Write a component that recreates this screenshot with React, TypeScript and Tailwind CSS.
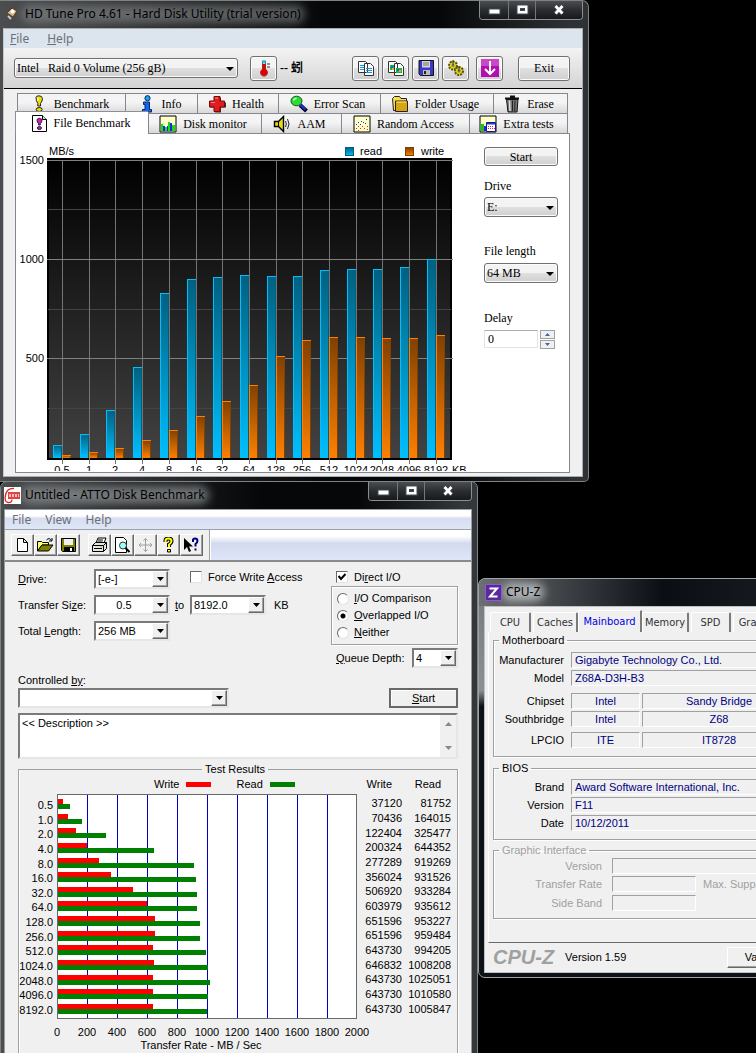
import type { ReactNode } from "react";

const sizes = ["0.5", "1", "2", "4", "8", "16", "32", "64", "128", "256", "512", "1024", "2048", "4096", "8192"];
const hdRead = [63, 123, 240, 457, 830, 900, 910, 920, 915, 915, 945, 950, 950, 960, 1005];
const hdWrite = [13, 28, 50, 90, 140, 210, 285, 370, 512, 592, 612, 612, 607, 607, 618];

const attoRows: Array<[string, number, number]> = [
  ["0.5", 37120, 81752],
  ["1.0", 70436, 164015],
  ["2.0", 122404, 325477],
  ["4.0", 200324, 644352],
  ["8.0", 277289, 919269],
  ["16.0", 356024, 931526],
  ["32.0", 506920, 933284],
  ["64.0", 603979, 935612],
  ["128.0", 651596, 953227],
  ["256.0", 651596, 959484],
  ["512.0", 643730, 994205],
  ["1024.0", 646832, 1008208],
  ["2048.0", 643730, 1025051],
  ["4096.0", 643730, 1010580],
  ["8192.0", 643730, 1005847],
];

/* ---------- window chrome ---------- */

function WindowButtons() {
  const cell = "flex h-[18px] items-center justify-center border-r border-[#74787b] bg-linear-to-b from-[#4b4e51] via-[#2b2d30] to-[#17191b]";
  return (
    <div className="flex overflow-hidden rounded-b-[4px] border border-t-0 border-[#8b8f92]">
      <button type="button" aria-label="Minimize" className={`${cell} w-[29px]`}>
        <svg width="13" height="12"><rect x="1" y="5" width="11" height="5" fill="#fff" stroke="#444a58" /></svg>
      </button>
      <button type="button" aria-label="Maximize" className={`${cell} w-[27px]`}>
        <svg width="13" height="12">
          <rect x="1" y="1" width="11" height="9" fill="#fff" stroke="#444a58" />
          <rect x="4.5" y="4.5" width="4" height="2" fill="#333" stroke="#444a58" />
        </svg>
      </button>
      <button type="button" aria-label="Close" className={`${cell} w-[46px] border-r-0`}>
        <svg width="13" height="12" fill="none">
          <path d="M2.5 2l7 7.5M9.5 2l-7 7.5" stroke="#444a58" strokeWidth="4.5" />
          <path d="M2.5 2l7 7.5M9.5 2l-7 7.5" stroke="#fff" strokeWidth="2.6" />
        </svg>
      </button>
    </div>
  );
}

function TitleBar({ icon, title, glow, controls = true }: { icon: ReactNode; title: string; glow: string; controls?: boolean }) {
  return (
    <div className="flex h-[27px] items-start justify-between overflow-hidden">
      <div className="flex h-[26px] items-center gap-1">
        <span className="relative z-10">{icon}</span>
        <h1 className="relative font-['Noto_Sans'] text-[12px] leading-[18px] whitespace-nowrap text-black">
          <span className={`absolute -inset-x-1 inset-y-0 rounded-full blur-[5px] ${glow}`} />
          <span className="relative">{title}</span>
        </h1>
      </div>
      {controls && <WindowButtons />}
    </div>
  );
}

/* ---------- HD Tune ---------- */

function Bang({ fill }: { fill: string }) {
  return (
    <>
      <path d="M6 2.5Q6 .8 9 .8T12.500 3.500Q12.500 6 10.500 8.500V11H7.800V8.500Q6 6 6 2.500Z" fill={fill} stroke="#222" />
      <ellipse cx="9.2" cy="14.5" rx="3" ry="2" fill={fill} stroke="#222" />
      <path d="M7.8 2.5v3" stroke="#fff" />
    </>
  );
}

const tabIcons: Record<string, ReactNode> = {
  Benchmark: <Bang fill="#e8de10" />,
  Info: (
    <>
      <circle cx="9.5" cy="3.2" r="2.6" fill="#19a4ef" stroke="#042a66" />
      <path d="M5.5 7h6v7.5h2V17h-9v-2.5h2.5v-5h-1.500z" fill="#1464f0" stroke="#042a66" />
    </>
  ),
  Health: (
    <>
      <path d="M7 2.5h6v5h5v5h-5v5H7v-5H2v-5h5z" fill="#333" />
      <path d="M6 1.5h6v4.500h4.500v6H12v4.500H6V12H1.500V6H6z" fill="#e01c1c" stroke="#7a0606" />
      <path d="M7 3h3M3 7.5h4" stroke="#ff8c8c" />
    </>
  ),
  "Error Scan": (
    <>
      <path d="M10 10l6.5 6" stroke="#000" strokeWidth="4" />
      <path d="M10.5 10l5 4.5" stroke="#1e2ae0" strokeWidth="2.5" />
      <ellipse cx="6.5" cy="6" rx="5.5" ry="4.8" fill="#2fd83a" stroke="#0b5d10" />
      <path d="M3.5 5.5Q4 3.5 6.5 3.3" stroke="#c9ffc9" fill="none" strokeWidth="1.5" />
    </>
  ),
  "Folder Usage": (
    <>
      <path d="M1.5 3.5l2-2h5l1.5 2h5.500v12h-13z" fill="#f5e04b" stroke="#222" />
      <path d="M4.5 6h12v10.5h-12z" fill="#d9a413" stroke="#222" />
      <path d="M5.5 7h10" stroke="#ffe88b" />
    </>
  ),
  Erase: (
    <>
      <path d="M3.5 4.5h11.5l-1 12.5H5z" fill="#777" stroke="#111" />
      <path d="M2 3.5h14M7 1.5h5" stroke="#111" strokeWidth="2" />
      <path d="M6.5 5.5l.5 10.5" stroke="#ddd" strokeWidth="1.5" />
      <path d="M9.5 5.5v10.5M12 5.5l-.3 10.5" stroke="#222" />
    </>
  ),
  "File Benchmark": (
    <>
      <path d="M2.5 1.5h10l4 4v12h-14z" fill="#fff" stroke="#000" />
      <path d="M12.5 1.5v4h4" fill="#ddd" stroke="#000" />
      <path d="M7 5.5q2-2.5 5 0 0 3-1.700 4V11H8.500V9.500Q7 8.500 7 5.500z" fill="#e012dc" stroke="#222" />
      <ellipse cx="9.4" cy="14" rx="2" ry="1.5" fill="#e012dc" stroke="#222" />
    </>
  ),
  "Disk monitor": (
    <>
      <path d="M1 1h16v16H1z" fill="#ffffc8" stroke="#000" />
      <path d="M2 9h2v7H2zM6 12h2v4H6zM9 7h2v9H9zM13 10h3v6h-3z" fill="#12e012" />
      <path d="M4 11h2v5H4zM8 11h1v5H8zM11 8h2v8h-2z" fill="#2222e8" />
    </>
  ),
  AAM: (
    <>
      <path d="M1.5 6.5h4l5-5v15l-5-5h-4z" fill="#e6dc14" stroke="#000" strokeWidth="1.4" />
      <path d="M5.5 6.5v5" stroke="#000" />
      <path d="M12.5 6q1.8 3 0 6M14.5 4q3 5 0 10" fill="none" stroke="#222" />
    </>
  ),
  "Random Access": (
    <>
      <path d="M1 1h16v16H1z" fill="#ffffc8" stroke="#000" />
      <path d="M3 9h1v1H3zM5 7h1v1H5zM7 9h1v1H7zM8 6h1v1H8zM10 7h1v1h-1zM13 4h1v1h-1zM12 8h1v1h-1z" fill="#22e" />
      <path d="M3 13h1v1H3zM5 11h1v1H5zM7 13h1v1H7zM9 11h1v1H9zM11 13h1v1h-1zM14 11h1v1h-1zM14 14h1v1h-1zM5 15h1v1H5z" fill="#e22" />
    </>
  ),
  "Extra tests": (
    <>
      <path d="M1 1h16v16H1z" fill="#ffffc8" stroke="#000" />
      <path d="M2 9h3v7H2z" fill="#12c812" />
      <path d="M5 11h2v5H5z" fill="#22e" />
      <path d="M7.5 7.5h9v9h-9z" fill="#fff" stroke="#111a88" />
      <path d="M8 8h8v1.5H8z" fill="#2233e0" />
      <path d="M9 11h1v1H9zM11 11h1v1h-1zM13 11h1v1h-1zM9 13h1v1H9zM11 13h1v1h-1zM13 13h1v1h-1zM15 13h1v1h-1z" fill="#e22" />
    </>
  ),
};

function Tab({ label, width }: { label: string; width: string }) {
  const selected = label === "File Benchmark";
  return (
    <button
      type="button"
      role="tab"
      aria-selected={selected}
      className={`flex items-center justify-center gap-[6px] pr-[4px] whitespace-nowrap ${width} ${
        selected
          ? "relative -mt-[2px] h-[23px] border-t border-l border-[#8e8f98] bg-white"
          : "h-[20px] border-t border-l border-[#85868f] bg-linear-to-b from-[#f4f4f4] from-45% to-[#d8d8d8] last:border-r"
      }`}
    >
      <svg width="18" height="18" className="shrink-0">{tabIcons[label]}</svg>
      {label}
    </button>
  );
}

const glossy = "rounded-[3px] border border-[#707070] bg-linear-to-b from-[#f3f3f3] from-48% via-[#e0e0e0] via-50% to-[#cfcfcf] text-black shadow-[inset_0_0_0_1px_#fbfbfb]";

function ToolButton({ label, children }: { label: string; children: ReactNode }) {
  return (
    <button type="button" aria-label={label} className={`flex h-[25px] w-[27px] items-center justify-center ${glossy}`}>
      <svg width="18" height="18">{children}</svg>
    </button>
  );
}

function GlossySelect({ id, value, width }: { id: string; value: string; width: string }) {
  return (
    <div className={`relative ${width}`}>
      <select id={id} aria-label={id} className={`h-[20px] w-full appearance-none pl-[2px] leading-[16px] ${glossy}`}>
        <option>{value}</option>
      </select>
      <svg width="8" height="4" className="pointer-events-none absolute top-[9px] right-[4px]"><path d="M0 0h8L4 4z" /></svg>
    </div>
  );
}

function FileBenchmarkChart() {
  const base = 324;
  const scale = 0.1985;
  const tick = (i: number) => Math.round(46 + i * 26.7);
  const lineY = (v: number) => Math.floor(base - v * scale);
  return (
    <svg width="450" height="337" className="font-['Liberation_Sans'] text-[11px]" shapeRendering="crispEdges">
      <defs>
        <linearGradient id="plot" x1="0" y1="0" x2="0" y2="1"><stop stopColor="#000" /><stop offset="1" stopColor="#424242" /></linearGradient>
        <linearGradient id="read" x1="0" y1="0" x2="0" y2="1"><stop stopColor="#006080" /><stop offset="1" stopColor="#00bfff" /></linearGradient>
        <linearGradient id="write" x1="0" y1="0" x2="0" y2="1"><stop stopColor="#804000" /><stop offset="1" stopColor="#ff8000" /></linearGradient>
      </defs>
      <rect x="31" y="24" width="405" height="302" fill="#000" />
      <rect x="33" y="26" width="401" height="298" fill="url(#plot)" />
      {[250, 750, 1250].map((v) => (
        <rect key={v} x="32" y={lineY(v)} width="403" height="1" fill="#444" />
      ))}
      {sizes.map((s, i) => (
        <rect key={s} x={tick(i)} y="26" width="1" height="304" fill="#747474" />
      ))}
      {[500, 1000, 1500].map((v) => (
        <g key={v}>
          <rect x="31" y={lineY(v)} width="406" height="1" fill="#808080" />
          <text x="28" y={lineY(v) + 4} textAnchor="end">{v}</text>
        </g>
      ))}
      {sizes.map((s, i) => {
        const x = tick(i);
        const r = Math.round(hdRead[i] * scale);
        const w = Math.round(hdWrite[i] * scale);
        return (
          <g key={s}>
            <rect x={x - 9} y={base - r} width="9" height={r} fill="url(#read)" />
            <path d={`M${x - 8.5} ${base}v${-r + 0.5}h8`} stroke="#00bfff" fill="none" />
            <path d={`M${x - 0.5} ${base - r + 1}v${r - 1}`} stroke="#00607f" />
            <rect x={x} y={base - w} width="9" height={w} fill="url(#write)" />
            <path d={`M${x + 0.5} ${base}v${-w + 0.5}h8`} stroke="#ff8000" fill="none" />
            <path d={`M${x + 8.5} ${base - w + 1}v${w - 1}`} stroke="#804000" />
            <text x={x} y="340" textAnchor="middle">{s}</text>
          </g>
        );
      })}
      <text x="436" y="340">KB</text>
      <text x="33" y="21">MB/s</text>
      <rect x="329.5" y="13.5" width="8" height="8" fill="url(#read)" stroke="#00607f" />
      <text x="344" y="21">read</text>
      <rect x="389.5" y="13.5" width="8" height="8" fill="url(#write)" stroke="#804000" />
      <text x="405" y="21">write</text>
    </svg>
  );
}

function HdTune() {
  return (
    <section className="absolute top-0 left-0 w-[589px] rounded-tr-[7px] rounded-br-[5px] border-t border-r border-b border-[#7d8384] bg-[linear-gradient(90deg,#4b4d4f_0,#2c2e30_25%,#050708_55%,#050708_75%,#2e3234_97%)] pr-[5px] pb-[4px] pl-[3px]">
      <TitleBar
        title="HD Tune Pro 4.61 - Hard Disk Utility (trial version)"
        glow="bg-[#8a8d90]/60"
        icon={
          <svg width="18" height="18">
            <path d="M4 8l5-5 5 3-4 6z" fill="#d9b48a" stroke="#5a3d24" />
            <circle cx="9.5" cy="6.5" r="2" fill="#fff" />
            <path d="M5 11l3 3" stroke="#c9c9c9" strokeWidth="2" />
          </svg>
        }
      />
      <div className="border border-t-[#a9adb0] border-r-[#a9adb0] border-b-[#a9adb0] border-l-[#c9c9c9] bg-[#f0f0f0] font-['Liberation_Serif'] text-[12px] text-black">
        <nav className="flex h-[19px] gap-[18px] bg-[#dce4ee] px-[6px] font-['Noto_Sans'] leading-[18px] text-[#6d7177]">
          <button type="button"><u>F</u>ile</button>
          <button type="button"><u>H</u>elp</button>
        </nav>
        <div className="flex h-[41px] items-center border-b border-black bg-linear-to-b from-[#f3f3f3] to-[#d4d4d4] pl-[10px]">
          <GlossySelect id="volume" value={"Intel\u00a0\u00a0 Raid 0 Volume (256 gB)"} width="w-[224px]" />
          <div className="ml-[12px] flex items-center gap-[3px]">
            <ToolButton label="Temperature">
              <path d="M7.5 2h3v8.5a3.5 3.5 0 1 1-3 0z" fill="#fff" stroke="#555" />
              <circle cx="9" cy="13.5" r="3.4" fill="#e00000" />
              <path d="M9 5v8" stroke="#e00000" strokeWidth="3" />
              <path d="M7.500 3h3" stroke="#20c8e0" strokeWidth="3" />
              <path d="M12 5h3M12 8h3" stroke="#333" />
            </ToolButton>
            <span className="font-['Liberation_Serif','Noto_Sans_CJK_TC',serif] font-bold">-- 蚓</span>
          </div>
          <div className="ml-auto flex gap-[3px]">
            <ToolButton label="Copy text">
              <path d="M1.5 2.5h7l2 2v9h-9zM7.5 4.5h6l3 3v9h-9z" fill="#fff" stroke="#333" />
              <path d="M3 6.500h4M3 8.500h4M3 10.500h4M9 9.500h6M9 11.500h6M9 13.500h6" stroke="#1a90d8" />
            </ToolButton>
            <ToolButton label="Copy image">
              <path d="M1.5 2.5h7l2 2v9h-9zM7.5 4.5h6l3 3v9h-9z" fill="#fff" stroke="#333" />
              <path d="M3 6h4v5H3zM9 9h6v5H9z" fill="#18b840" />
              <path d="M4 7h2v2H4zM10 10h2v2h-2z" fill="#1a60e8" />
              <path d="M5 9h2v2H5zM12 11h2v2h-2z" fill="#e8b020" />
            </ToolButton>
            <ToolButton label="Save">
              <path d="M2 1.5h14.5v15h-13L2 15z" fill="#3a3ac8" stroke="#111" />
              <path d="M5 2h8v6.5H5z" fill="#d5d5d5" />
              <path d="M6 4h6M6 6h6" stroke="#777" />
              <path d="M6 11h7v5H6z" fill="#bbb" />
              <path d="M7 12h2v3H7z" fill="#222" />
            </ToolButton>
            <ToolButton label="Options">
              <circle cx="6" cy="6.5" r="4" fill="#e0d820" stroke="#5a5408" strokeWidth="2" strokeDasharray="2 1" />
              <circle cx="12" cy="12" r="4" fill="#e0d018" stroke="#5a5408" strokeWidth="2" strokeDasharray="2 1" />
              <circle cx="6" cy="6.5" r="1.5" fill="#777" />
              <circle cx="12" cy="12" r="1.5" fill="#777" />
              <path d="M6 1v5M12 7v5" stroke="#333" />
            </ToolButton>
            <div className="ml-[4px]">
              <ToolButton label="Download">
                <rect width="18" height="18" fill="#b010b0" />
                <rect width="18" height="7" fill="#c848c8" />
                <path d="M9 2v12M4 10l5 5 5-5" fill="none" stroke="#fff" strokeWidth="2" />
              </ToolButton>
            </div>
          </div>
          <button type="button" className={`mr-[12px] ml-[15px] h-[25px] w-[52px] ${glossy}`}>Exit</button>
        </div>
        <div className="pt-[4px] pr-[12px] pb-[3px] pl-[11px]">
          <div role="tablist">
            <div className="flex pl-[2px]">
              <Tab label="Benchmark" width="w-[108px]" />
              <Tab label="Info" width="w-[72px]" />
              <Tab label="Health" width="w-[81px]" />
              <Tab label="Error Scan" width="w-[102px]" />
              <Tab label="Folder Usage" width="w-[113px]" />
              <Tab label="Erase" width="w-[75px]" />
            </div>
            <div className="flex">
              <Tab label="File Benchmark" width="w-[133px]" />
              <Tab label="Disk monitor" width="w-[113px]" />
              <Tab label="AAM" width="w-[80px]" />
              <Tab label="Random Access" width="w-[128px]" />
              <Tab label="Extra tests" width="w-[99px]" />
            </div>
          </div>
          <div className="-mt-px flex justify-between border border-[#85868f] bg-white pb-px">
            <FileBenchmarkChart />
            <div className="flex w-[85px] flex-col pt-[13px] pr-[11px]">
              <button type="button" className={`h-[19px] w-full leading-[16px] ${glossy}`}>Start</button>
              <label htmlFor="drive" className="mt-[12px] mb-[3px] leading-[16px]">Drive</label>
              <GlossySelect id="drive" value="E:" width="w-full" />
              <label htmlFor="length" className="mt-[26px] mb-[4px] leading-[16px]">File length</label>
              <GlossySelect id="length" value="64 MB" width="w-full" />
              <label htmlFor="delay" className="mt-[27px] mb-[4px] leading-[16px]">Delay</label>
              <div className="flex gap-[2px]">
                <input id="delay" defaultValue="0" className="h-[18px] w-[54px] border border-[#e2e3ea] border-t-[#abadb3] bg-white px-[3px]" />
                <div className="flex flex-col gap-px">
                  <button type="button" aria-label="Increase" className="flex h-[9px] w-[15px] items-center justify-center border border-[#a0a0a0] bg-[#f0f0f0]">
                    <svg width="5" height="3"><path d="M0 3h5L2.5 0z" fill="#4a5fb0" /></svg>
                  </button>
                  <button type="button" aria-label="Decrease" className="flex h-[9px] w-[15px] items-center justify-center border border-[#a0a0a0] bg-[#f0f0f0]">
                    <svg width="5" height="3"><path d="M0 0h5L2.5 3z" fill="#4a5fb0" /></svg>
                  </button>
                </div>
              </div>
            </div>
          </div>
        </div>
      </div>
    </section>
  );
}

/* ---------- ATTO ---------- */

const sunken = "border-2 border-t-[#7a7a7a] border-r-[#e6e6e6] border-b-[#e6e6e6] border-l-[#7a7a7a] bg-white";
const raised = "border border-t-white border-r-[#696969] border-b-[#696969] border-l-white bg-[#f0f0f0] shadow-[inset_-1px_-1px_0_#a0a0a0]";

function ClassicSelect({ id, value, width, center = false }: { id: string; value: string; width: string; center?: boolean }) {
  return (
    <div className={`relative ${width}`}>
      <select id={id} aria-label={id} className={`h-[20px] w-full appearance-none pr-[18px] pl-[2px] text-[11px] leading-[16px] text-black ${sunken} ${center ? "text-center" : ""}`}>
        <option>{value}</option>
      </select>
      <span className={`pointer-events-none absolute top-[2px] right-[2px] flex h-[16px] w-[16px] items-center justify-center ${raised}`}>
        <svg width="7" height="4"><path d="M0 0h7L3.5 4z" /></svg>
      </span>
    </div>
  );
}

function AttoButton({ label, children }: { label: string; children: ReactNode }) {
  return (
    <button type="button" aria-label={label} className={`flex h-[22px] w-[23px] items-center justify-center ${raised}`}>
      <svg width="17" height="16">{children}</svg>
    </button>
  );
}

function Radio({ label, accel, checked = false }: { label: string; accel: string; checked?: boolean }) {
  return (
    <label className="flex h-[17px] items-center gap-[5px]">
      <input
        type="radio"
        name="io"
        defaultChecked={checked}
        className="h-[12px] w-[12px] appearance-none rounded-full border border-t-[#696969] border-r-[#e3e3e3] border-b-[#e3e3e3] border-l-[#696969] bg-white checked:bg-[radial-gradient(circle,#000_2px,#fff_3px)]"
      />
      <span><u>{accel}</u>{label}</span>
    </label>
  );
}

function CheckBox({ id, checked = false }: { id: string; checked?: boolean }) {
  return (
    <span className="relative h-[12px] w-[12px]">
      <input id={id} type="checkbox" defaultChecked={checked} className="block h-[12px] w-[12px] appearance-none border border-t-[#696969] border-r-[#e3e3e3] border-b-[#e3e3e3] border-l-[#696969] bg-white" />
      {checked && (
        <svg width="8" height="8" className="pointer-events-none absolute top-[2px] left-[2px]"><path d="M.5 3l2.5 3L7.5 1" fill="none" stroke="#000" strokeWidth="2" /></svg>
      )}
    </span>
  );
}

function AttoChart() {
  const rowH = 14.64;
  const scale = 0.000149;
  return (
    <svg width="345" height="266" className="overflow-visible text-[11px]" shapeRendering="crispEdges">
      <rect x="38.5" y="2.5" width="299" height="224" fill="#fff" stroke="#696969" />
      {[1, 2, 3, 4, 5, 6, 7, 8, 9].map((n) => (
        <rect key={n} x={38 + n * 30} y="3" width="1" height="223" fill="#0000c0" />
      ))}
      {attoRows.map(([size, write, read], i) => {
        const y = Math.round(7 + i * rowH);
        return (
          <g key={size}>
            <rect x="39" y={y} width={Math.floor(write * scale)} height="5" fill="#f00" />
            <rect x="39" y={y + 5} width={Math.floor(read * scale)} height="5" fill="#008000" />
            <text x="34" y={y + 10} textAnchor="end">{size}</text>
          </g>
        );
      })}
      {[0, 200, 400, 600, 800, 1000, 1200, 1400, 1600, 1800, 2000].map((v) => (
        <text key={v} x={38 + v * 0.15} y="244" textAnchor="middle">{v}</text>
      ))}
      <text x="182" y="257" textAnchor="middle">Transfer Rate - MB / Sec</text>
    </svg>
  );
}

function Atto() {
  return (
    <section className="absolute top-[481px] left-0 w-[478px] rounded-t-[7px] border border-[#7d8384] bg-[linear-gradient(90deg,#4b4d4f_0,#232527_25%,#050708_55%,#050708_75%,#33373a_97%)] pr-[5px] pb-[5px] pl-[3px]">
      <TitleBar
        title="Untitled - ATTO Disk Benchmark"
        glow="bg-[#8a8d90]/80"
        icon={
          <svg width="17" height="17">
            <path d="M0 0h17v17H0z" fill="#fff" />
            <path d="M4 5h12v7H4z" fill="#d44" />
            <path d="M5 8.500h10" stroke="#fbb" strokeWidth="3" strokeDasharray="2 1" />
            <path d="M10 1.5Q3 1 1.5 8T4 15.5Q8 16 8 12.5" fill="none" stroke="#d22" strokeWidth="1.3" />
          </svg>
        }
      />
      <div className="border border-[#9a9da0] bg-[#f0f0f0] font-['Liberation_Sans'] text-[11px] text-black">
        <nav className="flex h-[20px] gap-[14px] border-b border-[#9aa0b0] bg-linear-to-b from-white from-30% via-[#d7def0] via-45% to-[#dfe6f6] px-[7px] font-['Noto_Sans'] text-[12px] leading-[17px] text-[#6d7177]">
          <button type="button">File</button>
          <button type="button">View</button>
          <button type="button">Help</button>
        </nav>
        <div className="flex h-[32px] border-b-2 border-[#8a8a8a]">
          <div className="flex w-[205px] items-center border-r border-[#a0a0a0] pl-[6px]">
            <AttoButton label="New"><path d="M3.5 1.5h6l4 4v9h-10zM9.5 1.5v4h4" fill="#fff" stroke="#000" /></AttoButton>
            <AttoButton label="Open">
              <path d="M.5 14V4.5h4l1 1h6V8H5z" fill="#ff6" stroke="#000" />
              <path d="M.5 14L5 8h11l-4.5 6z" fill="#808000" stroke="#000" />
              <path d="M9.5 3q3-3 5 .5M15 1v3h-3" fill="none" stroke="#000" />
            </AttoButton>
            <AttoButton label="Save">
              <path d="M1.5 1.5h14v13h-13l-1-1z" fill="#808000" stroke="#000" />
              <path d="M4 2h9v6H4z" fill="#f0f0f0" />
              <path d="M4 10h10v5H4z" fill="#000" />
              <path d="M10 11h2v3h-2z" fill="#fff" />
            </AttoButton>
            <span className="w-[8px]" />
            <AttoButton label="Print">
              <path d="M5 6l2-5h8l-2 5z" fill="#fff" stroke="#000" />
              <path d="M1.5 8.5l3-3h11v6l-3 3h-11z" fill="#e4e4e4" stroke="#000" />
              <path d="M1.5 8.5h11v6M12.5 8.5l3-3M7 3h5M6.5 5h5M3 11.5h8" fill="none" stroke="#000" />
              <path d="M9 10h2" stroke="#cc0" />
            </AttoButton>
            <AttoButton label="Print preview">
              <path d="M1.5.5h8l3 3v12h-11z" fill="#fff" stroke="#000" />
              <circle cx="9" cy="8.5" r="3.5" fill="#9ff" stroke="#333" />
              <path d="M11.5 11l4 4" stroke="#000" strokeWidth="2" />
            </AttoButton>
            <AttoButton label="Move">
              <path d="M8.5 1.5v13M2 8h13M6.5 3.5l2-2 2 2M6.5 12.5l2 2 2-2M4 6L2 8l2 2M13 6l2 2-2 2" fill="none" stroke="#a0a0a0" />
            </AttoButton>
            <AttoButton label="About">
              <path d="M5.5 5V3.5q0-2 3-2t3 2.5q0 2-2.5 3.5V10" fill="none" stroke="#000" strokeWidth="4" />
              <path d="M5.5 5V3.5q0-2 3-2t3 2.5q0 2-2.5 3.5V10" fill="none" stroke="#ff0" strokeWidth="2" />
              <path d="M7.5 12.5h3v2.5h-3z" fill="#ff0" stroke="#000" />
            </AttoButton>
            <AttoButton label="Context help">
              <path d="M1 1v12l3-3 2 5 2-1-2-4.5h4z" />
              <path d="M10 5V3q0-1.5 2.2-1.5T14.5 4Q14.5 5.5 12.5 7v2.5M12.5 11.5v2" fill="none" stroke="#000080" strokeWidth="2" />
            </AttoButton>
          </div>
          <div className="flex-1 border-l border-white bg-linear-to-b from-white from-20% via-[#d3daee] via-45% to-[#dfe6f8]" />
        </div>
        <div className="px-[13px] pt-[7px]">
          <div className="flex justify-between">
            <div className="grid grid-cols-[76px_76px_20px_76px_30px] content-start items-center gap-y-[6px]">
              <label htmlFor="Drive"><u>D</u>rive:</label>
              <ClassicSelect id="Drive" value="[-e-]" width="w-[76px]" />
              <span />
              <div className="col-span-2 -mt-[4px] flex items-center gap-[6px] whitespace-nowrap">
                <CheckBox id="force" />
                <label htmlFor="force">Force Write <u>A</u>ccess</label>
              </div>
              <label htmlFor="Transfer size from">Transfer Si<u>z</u>e:</label>
              <ClassicSelect id="Transfer size from" value="0.5" width="w-[76px]" center />
              <span className="pl-[5px]"><u>t</u>o</span>
              <ClassicSelect id="Transfer size to" value="8192.0" width="w-[76px]" />
              <span className="pl-[8px]">KB</span>
              <label htmlFor="Total length">Total <u>L</u>ength:</label>
              <ClassicSelect id="Total length" value="256 MB" width="w-[76px]" />
            </div>
            <div className="w-[127px]">
              <div className="flex h-[16px] items-center gap-[6px] pl-[5px]">
                <CheckBox id="direct" checked />
                <label htmlFor="direct">Di<u>r</u>ect I/O</label>
              </div>
              <div className="mt-px border border-[#a0a0a0] py-[3px] pl-[5px] shadow-[inset_1px_1px_0_#fff,1px_1px_0_#fff]">
                <Radio accel="I" label="/O Comparison" />
                <Radio accel="O" label="verlapped I/O" checked />
                <Radio accel="N" label="either" />
              </div>
              <div className="mt-[3px] flex items-center justify-between pl-[5px]">
                <label htmlFor="Queue depth"><u>Q</u>ueue Depth:</label>
                <ClassicSelect id="Queue depth" value="4" width="w-[46px]" />
              </div>
            </div>
          </div>
          <div className="mt-[5px] flex items-end justify-between">
            <div>
              <label htmlFor="Controlled by" className="block leading-[15px]">Controlled <u>by</u>:</label>
              <ClassicSelect id="Controlled by" value="" width="w-[211px]" />
            </div>
            <button type="button" className="h-[20px] w-[69px] border-2 border-[#696969] bg-[#f0f0f0] leading-[14px] shadow-[inset_1px_1px_0_#fff]">
              <u>S</u>tart
            </button>
          </div>
          <div className={`mt-[5px] flex h-[46px] ${sunken}`}>
            <textarea aria-label="Description" defaultValue="<< Description >>" className="flex-1 resize-none overflow-hidden px-[2px] leading-[16px]" />
            <div className="flex w-[16px] flex-col items-center justify-between bg-[#f0f0f0] py-[7px]">
              <svg width="7" height="4"><path d="M0 4h7L3.5 0z" fill="#888" /></svg>
              <svg width="7" height="4"><path d="M0 0h7L3.5 4z" fill="#888" /></svg>
            </div>
          </div>
          <fieldset className="mt-[3px] border border-[#a0a0a0] pr-[6px] shadow-[inset_1px_0_0_#fff,1px_0_0_#fff]">
            <legend className="mx-auto px-[3px] leading-[14px]">Test Results</legend>
            <div className="flex justify-between">
              <div>
                <div className="flex h-[16px] items-center pl-[135px]">
                  <span>Write</span>
                  <span className="ml-[7px] h-[5px] w-[25px] bg-[#f00]" />
                  <span className="ml-[25px]">Read</span>
                  <span className="ml-[7px] h-[5px] w-[25px] bg-[#008000]" />
                </div>
                <AttoChart />
              </div>
              <table className="h-[240px] border-collapse text-right">
                <thead>
                  <tr className="h-[20px] align-top leading-[16px]">
                    <th className="w-[37px] p-0 pr-[10px] font-normal">Write</th>
                    <th className="w-[49px] p-0 pr-[10px] font-normal">Read</th>
                  </tr>
                </thead>
                <tbody className="leading-[14px]">
                  {attoRows.map(([size, write, read]) => (
                    <tr key={size}>
                      <td className="p-0">{write}</td>
                      <td className="p-0">{read}</td>
                    </tr>
                  ))}
                </tbody>
              </table>
            </div>
          </fieldset>
        </div>
      </div>
    </section>
  );
}

/* ---------- CPU-Z ---------- */

function Field({ label, value, wide = false, center = false }: { label: string; value: string; wide?: boolean; center?: boolean }) {
  return (
    <output
      aria-label={label}
      className={`block h-[16px] border border-t-[#a0a0a0] border-r-white border-b-white border-l-[#a0a0a0] leading-[14px] text-[#000080] ${
        wide ? "flex-1" : "w-[69px]"
      } ${center ? "text-center" : "pl-[3px]"}`}
    >
      {value}
    </output>
  );
}

function Row({ label, children }: { label: string; children: ReactNode }) {
  return (
    <div className="flex items-center gap-[2px]">
      <span className="mr-[5px] w-[69px] shrink-0 text-right leading-[16px]">{label}</span>
      {children}
    </div>
  );
}

function DimRow({ label, children }: { label: string; children: ReactNode }) {
  return (
    <div className="flex items-center">
      <span className="mr-[10px] w-[107px] shrink-0 text-right leading-[16px]">{label}</span>
      {children}
    </div>
  );
}

const group = "border border-[#a0a0a0] pl-px shadow-[inset_1px_1px_0_#fff,1px_1px_0_#fff]";

function CpuZ() {
  const tab = "h-[20px] rounded-t-[2px] border-t border-r-2 border-l border-t-white border-r-[#7a7a7a] border-l-white text-center text-[#333]";
  return (
    <section className="absolute top-[578px] left-[478px] w-[410px] rounded-[7px] border border-[#9fa3a6] bg-[linear-gradient(180deg,#75787a_0,#8d9092_28%,#0d1218_32%)] p-[5px] pt-0 pb-[4px]">
      <div className="-mx-[5px] rounded-t-[6px] bg-[linear-gradient(90deg,#6d7072_0,#55585b_10%,#0b0f14_45%,#14181d_65%)] px-[6px]">
        <TitleBar
          title="CPU-Z"
          glow="bg-[#b0b3b5]"
          controls={false}
          icon={
            <svg width="17" height="17">
              <path d="M.5.5h16v16H.5z" fill="#5b2a9a" stroke="#8a5cc8" />
              <path d="M4.5 4.5h7.5l-7 8h7.5" fill="none" stroke="#fff" strokeWidth="2" />
            </svg>
          }
        />
      </div>
      <div className="border border-[#c0c0c0] bg-[#f0f0f0] pl-[3px] font-['Liberation_Sans'] text-[11px] text-black">
        <div role="tablist" className="flex items-end gap-[2px] pt-[3px] pl-[2px] font-['DejaVu_Sans_Condensed','Noto_Sans'] leading-[19px]">
          <button type="button" role="tab" className={`${tab} w-[41px]`}>CPU</button>
          <button type="button" role="tab" className={`${tab} w-[45px] border-r-0`}>Caches</button>
          <button type="button" role="tab" aria-selected className="-mx-[2px] h-[22px] w-[64px] border-t border-r-2 border-l border-t-white border-r-[#7a7a7a] border-l-white text-[#0000e0]">Mainboard</button>
          <button type="button" role="tab" className={`${tab} w-[47px]`}>Memory</button>
          <button type="button" role="tab" className={`${tab} w-[40px]`}>SPD</button>
          <button type="button" role="tab" className={`${tab} w-[56px]`}>Graphics</button>
        </div>
        <div className="border-b border-l border-b-[#696969] border-l-white pt-px pr-[6px] pb-[23px] pl-[4px]">
          <fieldset className={`${group} pb-[8px]`}>
            <legend className="ml-[4px] px-[3px] leading-[14px]">Motherboard</legend>
            <div className="flex flex-col gap-[2px] pt-[5px]">
              <Row label="Manufacturer"><Field label="Manufacturer" value="Gigabyte Technology Co., Ltd." wide /></Row>
              <Row label="Model"><Field label="Model" value="Z68A-D3H-B3" wide /></Row>
            </div>
            <div className="flex flex-col gap-[2px] pt-[7px] pr-[78px]">
              <Row label="Chipset"><Field label="Chipset vendor" value="Intel" center /><Field label="Chipset" value="Sandy Bridge" wide center /></Row>
              <Row label="Southbridge"><Field label="Southbridge vendor" value="Intel" center /><Field label="Southbridge" value="Z68" wide center /></Row>
            </div>
            <div className="pt-[5px] pr-[78px]">
              <Row label="LPCIO"><Field label="LPCIO vendor" value="ITE" center /><Field label="LPCIO" value="IT8728" wide center /></Row>
            </div>
          </fieldset>
          <fieldset className={`${group} mt-[4px] pb-[8px]`}>
            <legend className="ml-[4px] px-[3px] leading-[14px]">BIOS</legend>
            <div className="flex flex-col gap-[2px] pt-[4px]">
              <Row label="Brand"><Field label="Brand" value="Award Software International, Inc." wide /></Row>
              <Row label="Version"><Field label="BIOS version" value="F11" wide /></Row>
              <Row label="Date"><Field label="Date" value="10/12/2011" wide /></Row>
            </div>
          </fieldset>
          <fieldset className={`${group} mt-[3px] pb-[7px] text-[#a0a0a0]`}>
            <legend className="ml-[4px] px-[3px] leading-[14px]">Graphic Interface</legend>
            <div className="flex flex-col gap-[2px] pt-px">
              <DimRow label="Version"><Field label="Interface version" value="" wide /></DimRow>
              <DimRow label="Transfer Rate">
                <span className="flex w-[84px]"><Field label="Transfer rate" value="" wide /></span>
                <span className="ml-[7px] whitespace-nowrap">Max. Supported</span>
              </DimRow>
              <DimRow label="Side Band"><span className="flex w-[84px]"><Field label="Side band" value="" wide /></span></DimRow>
            </div>
          </fieldset>
        </div>
        <div className="flex h-[29px] items-center pl-[5px]">
          <span className="text-[20px] leading-[28px] font-bold text-[#a0a0a0] italic">CPU-Z</span>
          <span className="ml-[11px]">Version 1.59</span>
          <button type="button" className={`ml-[101px] h-[21px] w-[74px] ${raised}`}>Validate</button>
        </div>
      </div>
    </section>
  );
}

export default function App() {
  return (
    <main className="relative h-screen overflow-hidden bg-black">
      <HdTune />
      <Atto />
      <CpuZ />
    </main>
  );
}
